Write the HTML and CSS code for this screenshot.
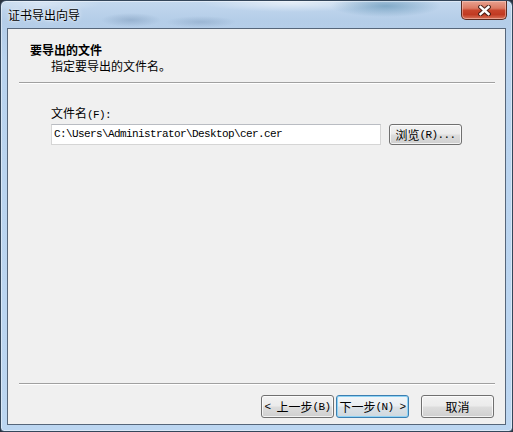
FILE: index.html
```html
<!DOCTYPE html>
<html lang="zh-CN">
<head>
<meta charset="utf-8">
<title>证书导出向导</title>
<link rel="stylesheet" href="styles.css">
</head>
<body>
<div class="window">
  <div class="titlebar">
    <span class="title">证书导出向导</span>
    <div class="close" aria-label="关闭">
      <svg width="13" height="11" viewBox="0 0 13 11">
        <path d="M2.5 2 L10.5 9 M10.5 2 L2.5 9" stroke="#3a1a14" stroke-width="4.6" stroke-linecap="square" fill="none" opacity="0.85"/>
        <path d="M2.5 2 L10.5 9 M10.5 2 L2.5 9" stroke="#ffffff" stroke-width="2.4" stroke-linecap="square" fill="none"/>
      </svg>
    </div>
  </div>
  <div class="client">
    <div class="header">
      <div class="h-title">要导出的文件</div>
      <div class="h-sub">指定要导出的文件名。</div>
    </div>
    <div class="sep"></div>
    <div class="body">
      <div class="label">文件名<span class="hw">(F):</span></div>
      <div class="row">
        <div class="input">C:\Users\Administrator\Desktop\cer.cer</div>
        <div class="btn browse">浏览<span class="hw">(R)...</span></div>
      </div>
    </div>
    <div class="sep"></div>
    <div class="footer">
      <div class="btn back"><span class="hw">&lt; </span>上一步<span class="hw">(B)</span></div>
      <div class="btn next default">下一步<span class="hw">(N) &gt;</span></div>
      <div class="btn cancel">取消</div>
    </div>
  </div>
</div>
</body>
</html>
```

FILE: styles.css
```css
html, body {
  margin: 0;
  padding: 0;
}
body {
  width: 513px;
  height: 432px;
  overflow: hidden;
  background: #2a3340;
  font-family: "Noto Sans CJK SC", "Noto Sans", sans-serif;
  font-size: 12px;
  color: #000;
}
.window {
  box-sizing: border-box;
  width: 513px;
  height: 432px;
  border: 1px solid #34465a;
  border-radius: 6px 6px 4px 4px;
  display: flex;
  flex-direction: column;
  background:
    radial-gradient(ellipse 55px 11px at 385px 5px, rgba(80,135,170,0.55), rgba(80,135,170,0) 100%),
    radial-gradient(ellipse 30px 7px at 130px 19px, rgba(100,130,165,0.35), rgba(100,130,165,0) 100%),
    radial-gradient(ellipse 35px 6px at 200px 21px, rgba(100,130,165,0.3), rgba(100,130,165,0) 100%),
    radial-gradient(ellipse 90px 9px at 290px 2px, rgba(255,255,255,0.55), rgba(255,255,255,0) 100%),
    radial-gradient(ellipse 60px 8px at 40px 3px, rgba(255,255,255,0.35), rgba(255,255,255,0) 100%),
    linear-gradient(180deg, #c3d8ee 0%, #b4cde8 20px, #b9d3ee 60px, #bcd6f1 100%);
  box-shadow: inset 0 0 0 1px rgba(255,255,255,0.45);
}
.titlebar {
  height: 27px;
  flex: none;
  display: flex;
  align-items: flex-start;
}
.title {
  margin-left: 7px;
  margin-top: 8px;
  line-height: 12px;
  font-size: 12px;
  color: #000;
  text-shadow: 0 0 5px rgba(255,255,255,0.9), 0 0 2px rgba(255,255,255,0.8);
}
.close {
  margin-left: auto;
  margin-right: 5px;
  width: 46px;
  height: 19px;
  box-sizing: border-box;
  border: 1px solid #5a2c22;
  border-top: none;
  border-radius: 0 0 5px 5px;
  background: linear-gradient(180deg, #e8a290 0%, #dc7a63 40%, #c8452c 52%, #c13a22 75%, #d8735a 100%);
  box-shadow: inset 0 0 0 1px rgba(255,220,210,0.45);
  display: flex;
  align-items: center;
  justify-content: center;
}
.close svg {
  display: block;
  margin-top: 1px;
}
.client {
  flex: 1;
  margin: 0 6px 6px 6px;
  border: 1px solid #56667a;
  background: #f0f0f0;
  display: flex;
  flex-direction: column;
}
.header {
  padding-top: 15px;
  height: 43px;
  box-sizing: border-box;
  flex: none;
}
.h-title {
  margin-left: 22px;
  line-height: 12px;
  font-weight: bold;
}
.h-sub {
  margin-left: 43px;
  margin-top: 4px;
  line-height: 12px;
}
.sep {
  flex: none;
  margin: 10px 10px 0 11px;
  height: 0;
  border-top: 1px solid #a0a0a0;
  border-bottom: 1px solid #ffffff;
}
.body {
  flex: 1;
  padding-left: 43px;
  padding-top: 23px;
}
.label {
  line-height: 12px;
}
.hw {
  font-family: "Liberation Mono", "DejaVu Sans Mono", monospace;
  font-size: 11px;
  letter-spacing: -0.6px;
  white-space: pre;
}
.row {
  margin-top: 3px;
  display: flex;
  align-items: flex-start;
  gap: 8px;
}
.input {
  box-sizing: border-box;
  width: 330px;
  height: 21px;
  background: #fff;
  border: 1px solid #d5d5d5;
  border-top-color: #b9bcc2;
  padding-left: 2px;
  font-family: "Liberation Mono", "DejaVu Sans Mono", monospace;
  font-size: 11px;
  letter-spacing: -0.6px;
  line-height: 19px;
  white-space: nowrap;
  overflow: hidden;
}
.btn {
  box-sizing: border-box;
  width: 73px;
  height: 23px;
  border: 1px solid #707070;
  border-radius: 3px;
  background: linear-gradient(180deg, #f2f2f2 0%, #ebebeb 48%, #dddddd 52%, #cfcfcf 100%);
  box-shadow: inset 0 0 0 1px rgba(255,255,255,0.75);
  display: flex;
  align-items: center;
  justify-content: center;
  line-height: 12px;
  white-space: nowrap;
}
.browse {
  height: 21px;
}
.footer {
  flex: none;
  display: flex;
  justify-content: flex-end;
  padding: 10px 11px 6px 0;
}
.back {
  margin-right: 2px;
}
.next {
  margin-right: 12px;
}
.default {
  border-color: #3c7fb1;
  box-shadow: inset 0 0 0 1px #8fd3f5;
  background: linear-gradient(180deg, #f2f6f9 0%, #e9eef2 48%, #dbe2e7 52%, #cfd8de 100%);
}
```
